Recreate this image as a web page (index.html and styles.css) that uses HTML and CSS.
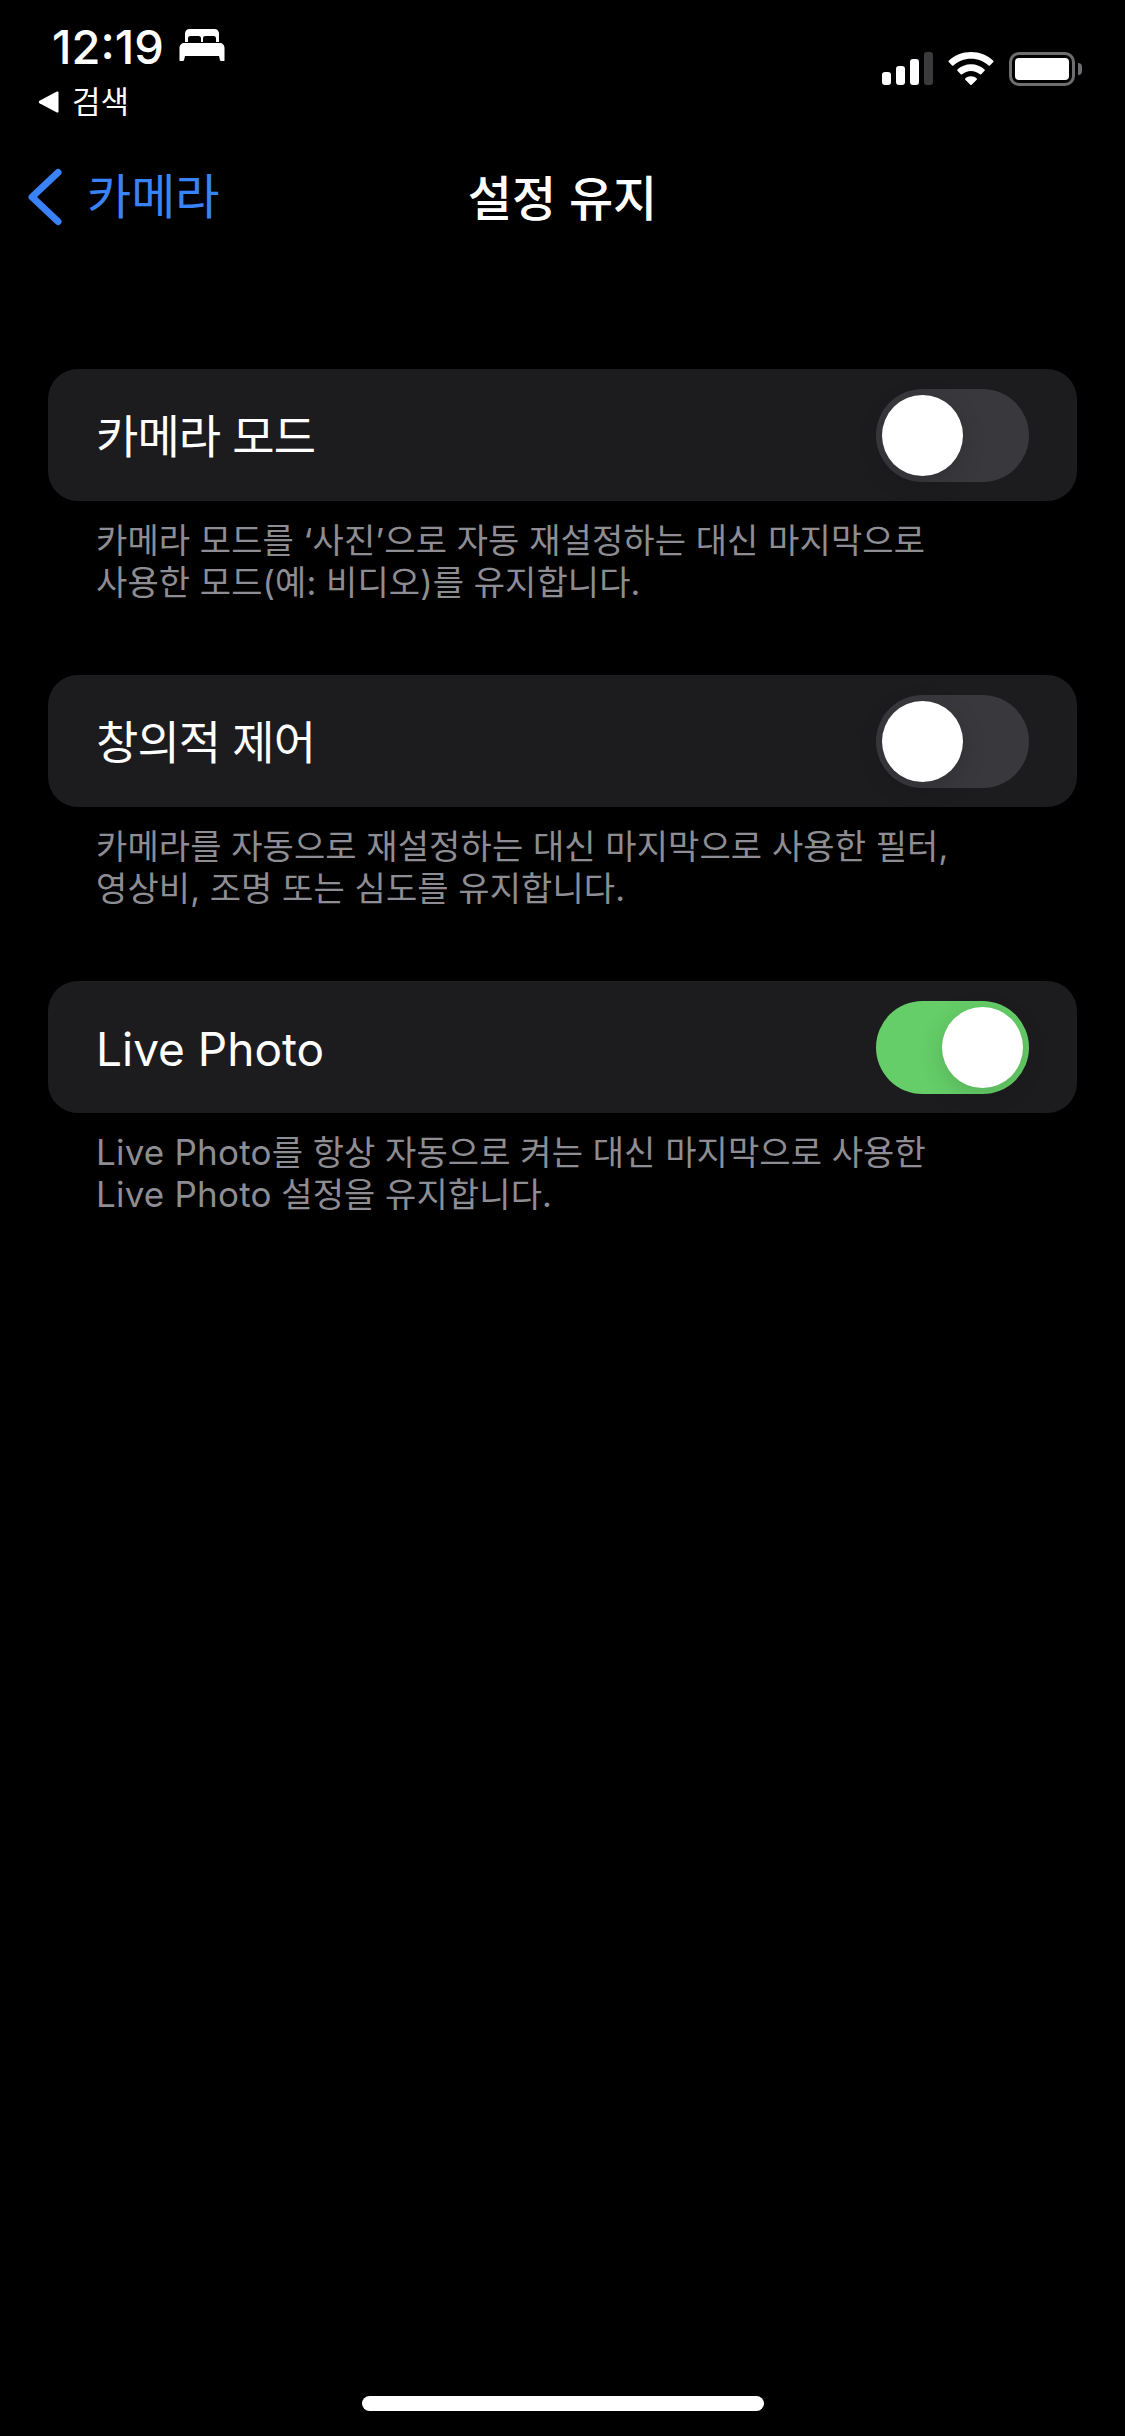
FILE: index.html
```html
<!DOCTYPE html>
<html lang="ko">

<head>
    <meta charset="UTF-8">
    <meta name="viewport" content="width=device-width, initial-scale=1.0">
    <title>설정 유지</title>
    <link rel="stylesheet" href="styles.css">
</head>

<body>
    <div class="status-bar">
        <div class="status-left">
            <div class="time-row">
                <span class="time">12:19</span>
                <svg class="bed-icon" width="46" height="32" viewBox="0 0 46 32">
                    <path fill="#fff" d="M6 13V4.500C6 2 8 0 10.500 0h25C38 0 40 2 40 4.500V13h-3V9.500C37 7.800 36 7 34.500 7h-8C25 7 24 7.800 24 9.500V13h-2V9.500C22 7.800 21 7 19.500 7h-8C10 7 9 7.800 9 9.500V13z" />
                    <path fill="#fff" d="M5.500 14h35C43.500 14 45.500 16 45.500 19v12.500c0 .3-.2.500-.5.500h-3c-.5 0-.8-.3-1-.8L40 27H6l-1 4.200c-.2.500-.5.800-1 .8H1c-.3 0-.5-.2-.5-.5V19C.5 16 2.500 14 5.500 14z" />
                </svg>
            </div>
            <div class="back-app">
                <svg width="22" height="22" viewBox="0 0 22 22">
                    <path fill="#fff" d="M20.500 1.500v19c0 1-.8 1.300-1.600.9L1.500 12.300c-.9-.5-.9-2 0-2.600L18.900.6c.8-.4 1.600 0 1.600.9z" />
                </svg>
                <span>검색</span>
            </div>
        </div>
        <div class="status-right">
            <svg width="51" height="33" viewBox="0 0 51 33">
                <rect x="0" y="20" width="9" height="13" rx="3" fill="#fff" />
                <rect x="14" y="14" width="9" height="19" rx="3" fill="#fff" />
                <rect x="28" y="7" width="9" height="26" rx="3" fill="#fff" />
                <rect x="42" y="0" width="9" height="33" rx="3" fill="#3a3a3c" />
            </svg>
            <svg width="46" height="33" viewBox="0 0 46 33">
                <path fill="#fff" d="M23 0c8.600 0 16.400 3.300 22.300 8.700.4.400.4.900 0 1.300l-3.400 3.500c-.4.400-.9.400-1.300 0C36 9.300 29.800 6.800 23 6.800S10 9.300 5.400 13.500c-.4.400-.9.400-1.300 0L.7 10c-.4-.4-.4-.9 0-1.300C6.600 3.300 14.400 0 23 0z" />
                <path fill="#fff" d="M23 12.200c5.200 0 10 2 13.600 5.300.4.400.4.900 0 1.300l-3.400 3.500c-.4.400-.9.400-1.300 0-2.400-2.100-5.500-3.400-8.900-3.400s-6.500 1.300-8.900 3.400c-.4.400-.9.400-1.300 0l-3.400-3.500c-.4-.4-.4-.9 0-1.300C13 14.200 17.800 12.200 23 12.200z" />
                <path fill="#fff" d="M23 24.300c2.200 0 4.200.8 5.700 2.100.4.400.4.900 0 1.300l-5 5c-.4.400-1 .4-1.400 0l-5-5c-.4-.4-.4-.9 0-1.300 1.500-1.300 3.500-2.100 5.700-2.100z" />
            </svg>
            <div class="battery">
                <div class="battery-body">
                    <div class="battery-fill"></div>
                </div>
                <div class="battery-cap"></div>
            </div>
        </div>
    </div>

    <div class="nav-bar">
        <div class="nav-back">
            <svg width="36" height="58" viewBox="0 0 36 58">
                <path fill="none" stroke="#3a82f7" stroke-width="7" stroke-linecap="round" stroke-linejoin="round" d="M31 4.500 5 29l26 24.500" />
            </svg>
            <span>카메라</span>
        </div>
        <div class="nav-title">설정 유지</div>
    </div>

    <div class="settings">
        <section class="group">
            <div class="card">
                <span class="card-label">카메라 모드</span>
                <div class="toggle">
                    <div class="knob"></div>
                </div>
            </div>
            <p class="note">카메라 모드를 ‘사진’으로 자동 재설정하는 대신 마지막으로<br>사용한 모드(예: 비디오)를 유지합니다.</p>
        </section>

        <section class="group">
            <div class="card">
                <span class="card-label">창의적 제어</span>
                <div class="toggle">
                    <div class="knob"></div>
                </div>
            </div>
            <p class="note">카메라를 자동으로 재설정하는 대신 마지막으로 사용한 필터,<br>영상비, 조명 또는 심도를 유지합니다.</p>
        </section>

        <section class="group">
            <div class="card">
                <span class="card-label latin">Live Photo</span>
                <div class="toggle on">
                    <div class="knob"></div>
                </div>
            </div>
            <p class="note"><span class="latin-run">Live Photo</span>를 항상 자동으로 켜는 대신 마지막으로 사용한<br><span class="latin-run">Live Photo</span> 설정을 유지합니다.</p>
        </section>
    </div>

    <div class="home-indicator"></div>
</body>

</html>
```

FILE: styles.css
```css
* {
    box-sizing: border-box;
}

html,
body {
    height: 2436px;
}

body {
    margin: 0;
    background: #000;
    color: #fff;
    font-family: Inter, "Noto Sans CJK KR", sans-serif;
    display: flex;
    flex-direction: column;
    overflow: hidden;
}

.status-bar {
    height: 126px;
    padding: 22px 43px 0 36px;
    display: flex;
    justify-content: space-between;
}

.time-row {
    display: flex;
    align-items: center;
    gap: 15px;
    padding-left: 16px;
    height: 50px;
}

.time {
    font-size: 47px;
    font-weight: 500;
    line-height: 50px;
}

.bed-icon {
    margin-top: -4px;
}

.back-app {
    display: flex;
    align-items: center;
    gap: 12px;
    height: 40px;
    margin-top: 10px;
    padding-left: 2px;
    font-size: 31px;
    line-height: 40px;
}

.status-right {
    display: flex;
    align-items: flex-start;
    gap: 15px;
    padding-top: 30px;
}

.battery {
    display: flex;
    align-items: center;
    gap: 3px;
    height: 33px;
}

.battery-body {
    width: 66px;
    height: 34px;
    padding: 3px;
    border: 3px solid #6e6e70;
    border-radius: 10px;
}

.battery-fill {
    height: 100%;
    background: #fff;
    border-radius: 4px;
}

.battery-cap {
    width: 4px;
    height: 12px;
    background: #6e6e70;
    border-radius: 0 4px 4px 0;
}

.nav-bar {
    height: 144px;
    position: relative;
    display: flex;
    align-items: center;
    justify-content: center;
}

.nav-back {
    position: absolute;
    left: 27px;
    top: 42px;
    display: flex;
    align-items: center;
    gap: 24px;
    color: #3a82f7;
    font-size: 48px;
    line-height: 58px;
}

.nav-title {
    font-size: 48px;
    font-weight: 500;
    margin-top: -6px;
}

.settings {
    padding: 99px 48px 0;
    display: flex;
    flex-direction: column;
    gap: 71px;
}

.card {
    height: 132px;
    padding: 0 48px;
    background: #1c1c1e;
    border-radius: 30px;
    display: flex;
    align-items: center;
    justify-content: space-between;
}

.card-label {
    font-size: 46px;
    letter-spacing: -0.9px;
    margin-top: -4px;
}

.card-label.latin {
    letter-spacing: 0;
    margin-top: 4px;
}

.toggle {
    width: 153px;
    height: 93px;
    padding: 6px;
    background: #39393d;
    border-radius: 47px;
    display: flex;
}

.toggle.on {
    background: #65ce68;
    justify-content: flex-end;
}

.knob {
    width: 81px;
    height: 81px;
    background: #fff;
    border-radius: 50%;
    box-shadow: 0 6px 24px rgba(0, 0, 0, 0.15);
}

.note {
    margin: 19px 0 0;
    padding: 0 48px;
    color: #8d8d93;
    font-size: 34px;
    letter-spacing: 0.1px;
    line-height: 42px;
}

.latin-run {
    font-size: 35px;
    letter-spacing: 0.2px;
    line-height: 1;
}

.home-indicator {
    width: 402px;
    height: 15px;
    margin: auto auto 25px;
    background: #fff;
    border-radius: 8px;
}
```
